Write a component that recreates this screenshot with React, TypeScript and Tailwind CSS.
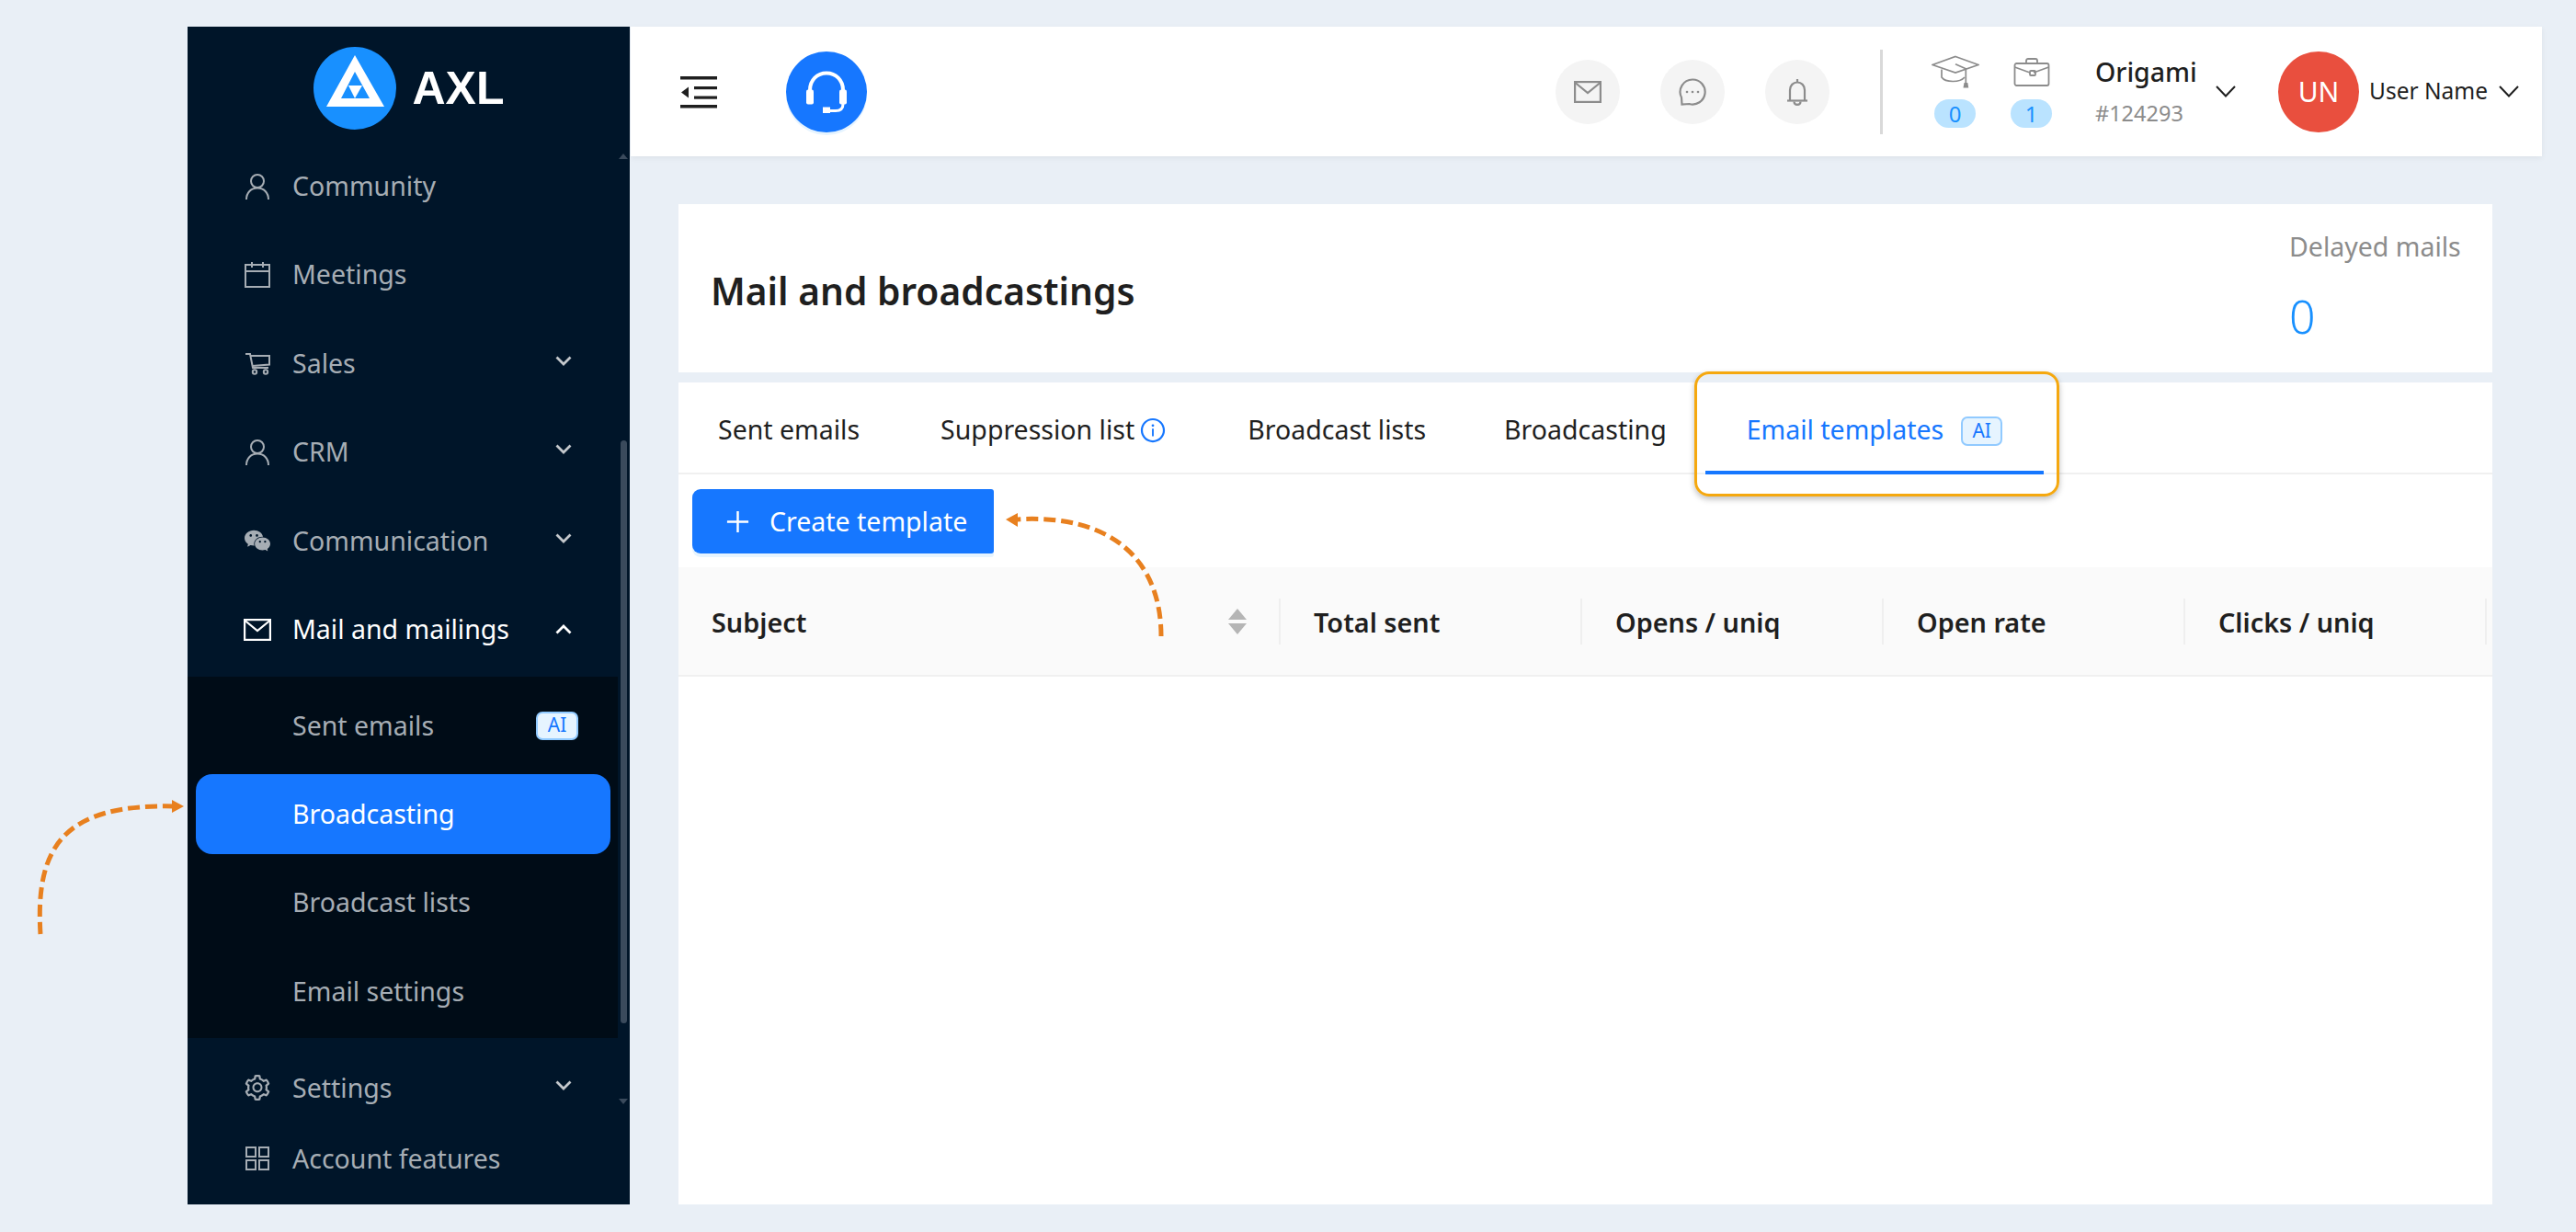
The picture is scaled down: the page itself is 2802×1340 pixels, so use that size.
import React from "react";
import { AiOutlineSetting, AiOutlinePlus, AiFillWechat, AiOutlineInfoCircle } from "react-icons/ai";

const Person = () => (
  <svg viewBox="0 0 28 29" className="h-[29px] w-[28px]" fill="none" stroke="currentColor" strokeWidth="2">
    <circle cx="14" cy="9" r="7" />
    <path d="M2 29c0-7.500 5-12.500 12-12.500S26 21.500 26 29" />
  </svg>
);

const CalendarIcon = () => (
  <svg viewBox="0 0 28 28" className="h-[28px] w-[28px]" fill="none" stroke="currentColor" strokeWidth="2">
    <rect x="1" y="3" width="26" height="24" />
    <path d="M1 10h26M8 0v6M20 0v6" />
  </svg>
);

const CartIcon = () => (
  <svg viewBox="0 0 29 25" className="h-[25px] w-[29px]" fill="none" stroke="currentColor" strokeWidth="2">
    <path d="M1 2h5l3 15h17" />
    <path d="M6.500 4H27v9.500L8.500 15" />
    <circle cx="11" cy="21.500" r="2.200" />
    <circle cx="23" cy="21.500" r="2.200" />
  </svg>
);

const GridIcon = () => (
  <svg viewBox="0 0 26 26" className="h-[26px] w-[26px]" fill="none" stroke="currentColor" strokeWidth="2">
    <rect x="1" y="1" width="10" height="10" />
    <rect x="15" y="1" width="10" height="10" />
    <rect x="1" y="15" width="10" height="10" />
    <rect x="15" y="15" width="10" height="10" />
  </svg>
);

const Chevron = ({ up, className }: { up?: boolean; className?: string }) => (
  <svg viewBox="0 0 18 11" className={`h-[11px] w-[18px] ${className ?? ""}`} fill="none" stroke="currentColor" strokeWidth="2.800">
    <path d={up ? "M1.500 9.500L9 2l7.500 7.500" : "M1.500 1.500L9 9l7.500-7.500"} />
  </svg>
);

const ThinChevron = ({ className }: { className?: string }) => (
  <svg viewBox="0 0 22 13" className={`h-[13px] w-[22px] shrink-0 text-[#1f1f1f] ${className ?? ""}`} fill="none" stroke="currentColor" strokeWidth="2">
    <path d="M1 1l10 10.500L21 1" />
  </svg>
);

const Logo = () => (
  <svg viewBox="0 0 90 90" className="h-[90px] w-[90px]">
    <circle cx="45" cy="45" r="45" fill="#1890ff" />
    <path d="M45 9 L14 65 H77 Z M45 27 L30 56 H61 Z" fill="#fff" fillRule="evenodd" />
    <path d="M38 42 H53 L45 56 Z" fill="#fff" />
  </svg>
);

const Menu = () => (
  <svg viewBox="0 0 40 36" className="h-[36px] w-[40px]" fill="#1f1f1f">
    <rect x="0" y="1" width="40" height="3.500" />
    <rect x="15" y="12" width="25" height="3.200" />
    <rect x="15" y="22.500" width="25" height="3.200" />
    <rect x="0" y="32" width="40" height="3.500" />
    <path d="M1 18.500L9 12.500V24.500Z" />
  </svg>
);

const Headset = () => (
  <svg viewBox="0 0 46 46" className="h-[46px] w-[46px]" fill="none" stroke="#fff" strokeWidth="4">
    <path d="M5 24V21C5 10 13 2.500 23 2.500S41 10 41 21v3" />
    <rect x="1" y="20.500" width="8" height="16" rx="2" fill="#fff" stroke="none" />
    <rect x="37" y="20.500" width="8" height="16" rx="2" fill="#fff" stroke="none" />
    <path d="M41 36c0 5-3 7.500-8 7.500H22" strokeWidth="3" />
    <rect x="19" y="39.500" width="8" height="6.500" fill="#fff" stroke="none" />
  </svg>
);

const Cap = () => (
  <svg viewBox="0 0 52 36" className="h-[36px] w-[52px] shrink-0" fill="none" stroke="#8c8c8c" strokeWidth="1.700">
    <path d="M26 1.500 L51 10.500 L26 19 L1 10.500 Z" />
    <path d="M11 15.500V24c4 6 20 6 25 0" />
    <path d="M26 9.700l11.300 5V30" />
    <path d="M35.500 30h3.800l1 5.500h-5.800z" fill="#8c8c8c" stroke="none" />
  </svg>
);

const Case = () => (
  <svg viewBox="0 0 40 31" className="h-[31px] w-[40px] shrink-0" fill="none" stroke="#8c8c8c" strokeWidth="1.800">
    <rect x="1.500" y="6" width="37" height="24" rx="2" />
    <path d="M14 6V3c0-1.500 1-2 2-2h8c1 0 2 .5 2 2v3" />
    <path d="M1.500 10l16.500 6M38.500 10L22 16" />
    <rect x="18" y="14" width="6" height="5" rx="1" />
  </svg>
);

const Env = ({ cls = "h-[24px] w-[30px]" }: { cls?: string }) => (
  <svg viewBox="0 0 30 24" className={cls} fill="none" stroke="currentColor" strokeWidth="2.200">
    <rect x="1.100" y="1.100" width="27.800" height="21.800" />
    <path d="M1.500 2L15 13 28.500 2" />
  </svg>
);

const Chat = () => (
  <svg viewBox="0 0 30 30" className="h-[30px] w-[30px]" fill="none" stroke="#8c8c8c" strokeWidth="2.200">
    <path d="M15 1.500a13.500 13.500 0 1 1-3.500 26.500l-8 .5-.5-7.500A13.500 13.500 0 0 1 15 1.500Z" />
    <circle cx="9" cy="15" r="1.300" fill="#8c8c8c" stroke="none" />
    <circle cx="15" cy="15" r="1.300" fill="#8c8c8c" stroke="none" />
    <circle cx="21" cy="15" r="1.300" fill="#8c8c8c" stroke="none" />
  </svg>
);

const Bell = () => (
  <svg viewBox="0 0 24 30" className="h-[30px] w-[24px]" fill="none" stroke="#8c8c8c" strokeWidth="2.200">
    <path d="M4 24V13c0-5 3.500-8.500 8-8.500s8 3.500 8 8.500v11" />
    <path d="M1 24.500h22" />
    <path d="M12 1v3" />
    <path d="M8.500 25.500c0 4.500 7 4.500 7 0" />
  </svg>
);

const AiBadge = ({ className }: { className: string }) => (
  <span className={`flex items-center justify-center rounded-[7px] border-2 border-[#91caff] bg-[#e6f4ff] text-[21px] text-[#1677ff] ${className}`}>AI</span>
);

type RowProps = { icon: React.ReactNode; label: string; chev?: "down" | "up"; active?: boolean; h?: string };

const Row = ({ icon, label, chev, active, h = "h-[96.5px]" }: RowProps) => (
  <div className={`flex ${h} items-center pl-[60px] pr-[63px] ${active ? "text-white" : "text-[#a6adb4]"}`}>
    <span className="flex w-[32px] justify-center">{icon}</span>
    <span className="ml-[22px] flex-1">{label}</span>
    {chev === "down" && <Chevron className="mb-[6px] text-[#c4c8cc]" />}
    {chev === "up" && <Chevron up className="text-white" />}
  </div>
);

const Sub = ({ label, active, badge }: { label: string; active?: boolean; badge?: boolean }) => (
  <div className="flex h-[96.3px] items-center pl-[9px] pr-[8px]">
    <div className={`flex h-[87px] w-full items-center rounded-[18px] pl-[105px] pr-[35px] ${active ? "bg-[#1677ff] text-white" : "text-[#a6adb4]"}`}>
      <span className="flex-1">{label}</span>
      {badge && <AiBadge className="h-[31px] w-[46px]" />}
    </div>
  </div>
);

const Circle = ({ children }: { children: React.ReactNode }) => (
  <div className="flex h-[70px] w-[70px] items-center justify-center rounded-full bg-[#f4f4f4]">{children}</div>
);

const Column = ({ label, w, sort }: { label: string; w: string; sort?: boolean }) => (
  <div className={`relative flex h-full items-center pl-[36px] ${w}`}>
    <span className="flex-1 pt-[3px]">{label}</span>
    {sort && (
      <span className="mr-[35px] flex flex-col gap-[4px]">
        <span className="h-0 w-0 border-x-[10px] border-b-[12px] border-x-transparent border-b-[#b5b5b5]" />
        <span className="h-0 w-0 border-x-[10px] border-t-[12px] border-x-transparent border-t-[#b5b5b5]" />
      </span>
    )}
    <span className="h-[50px] w-[2px] bg-[#efefef]" />
  </div>
);

export default function App() {
  return (
    <div className="relative h-[1340px] w-[2802px] overflow-hidden bg-[#e9eff6] pl-[204px] pr-[37px] pt-[29px] font-['Noto_Sans',sans-serif] text-[28.5px]">
      <div className="flex h-[1281px]">
        <aside className="relative h-full w-[481px] shrink-0 bg-[#001529]">
          <div className="flex h-[125px] items-start justify-center pt-[22px]">
            <Logo />
            <span className="ml-[18px] mt-[15px] font-['Liberation_Sans',sans-serif] text-[50px] font-bold leading-[60px] text-white">AXL</span>
          </div>
          <Row icon={<Person />} label="Community" />
          <Row icon={<CalendarIcon />} label="Meetings" />
          <Row icon={<CartIcon />} label="Sales" chev="down" />
          <Row icon={<Person />} label="CRM" chev="down" />
          <Row icon={<AiFillWechat className="text-[36px]" />} label="Communication" chev="down" />
          <Row icon={<Env />} label="Mail and mailings" chev="up" active />
          <div className="mt-[3px] h-[393px] w-[468px] bg-[#000c17] pt-[5px]">
            <Sub label="Sent emails" badge />
            <Sub label="Broadcasting" active />
            <Sub label="Broadcast lists" />
            <Sub label="Email settings" />
          </div>
          <Row icon={<AiOutlineSetting className="text-[34px]" />} label="Settings" chev="down" h="h-[108px]" />
          <Row icon={<GridIcon />} label="Account features" h="h-[46px]" />
          <div className="absolute right-[3px] top-[450px] h-[634px] w-[7px] rounded-full bg-[#3a4a5c]" />
          <div className="absolute right-[2px] top-[138px] h-0 w-0 border-x-[5px] border-b-[6px] border-x-transparent border-b-[#3a4a5c]" />
          <div className="absolute right-[2px] top-[1166px] h-0 w-0 border-x-[5px] border-t-[6px] border-x-transparent border-t-[#3a4a5c]" />
        </aside>

        <main className="ml-[1px] flex min-w-0 flex-1 flex-col">
          <header className="flex h-[141px] items-center bg-white pl-[54px] pr-[25px] shadow-[0_2px_6px_rgba(0,0,0,0.06)]">
            <Menu />
            <div className="ml-[75px] flex h-[88px] w-[88px] items-center justify-center rounded-full bg-[#1677ff] shadow-[0_3px_0_#e6f4ff]">
              <Headset />
            </div>
            <div className="flex-1" />
            <div className="flex gap-[44px] text-[#8c8c8c]">
              <Circle><Env /></Circle>
              <Circle><Chat /></Circle>
              <Circle><Bell /></Circle>
            </div>
            <div className="ml-[55px] h-[92px] w-[3px] bg-[#d9d9d9]" />
            <div className="ml-[56px] flex gap-[38px]">
              <div className="flex w-[45px] flex-col items-center gap-[12px]">
                <div className="flex h-[36px] items-center"><Cap /></div>
                <span className="flex h-[31px] w-[45px] items-center justify-center rounded-full bg-[#bae3ff] text-[24px] leading-none text-[#1890ff]">0</span>
              </div>
              <div className="flex w-[45px] flex-col items-center gap-[12px]">
                <div className="flex h-[36px] items-center"><Case /></div>
                <span className="flex h-[31px] w-[45px] items-center justify-center rounded-full bg-[#bae3ff] text-[24px] leading-none text-[#1890ff]">1</span>
              </div>
            </div>
            <div className="ml-[47px] flex w-[111px] flex-col">
              <span className="-mt-[2px] text-[28.5px] font-medium leading-[40px] text-[#1f1f1f]">Origami</span>
              <span className="mt-[9px] text-[23.5px] leading-[32px] text-[#8c8c8c]">#124293</span>
            </div>
            <ThinChevron className="ml-[20px]" />
            <div className="ml-[46px] flex h-[88px] w-[88px] shrink-0 items-center justify-center rounded-full bg-[#e94f3e] text-[30px] text-white">UN</div>
            <span className="ml-[11px] w-[127px] whitespace-nowrap text-[24.5px] text-[#1f1f1f]">User Name</span>
            <ThinChevron className="ml-[14px]" />
          </header>

          <div className="ml-[52px] mr-[54px] mt-[52px] flex min-h-0 flex-1 flex-col">
            <section className="flex h-[183px] items-start justify-between bg-white pl-[35px] pr-[34px]">
              <h1 className="mt-[68px] text-[40.7px] font-semibold leading-[52px] text-[#1f1f1f]">Mail and broadcastings</h1>
              <div className="mt-[28px] w-[187px]">
                <div className="text-[28.5px] leading-[36px] text-[#8c8c8c]">Delayed mails</div>
                <div className="mt-[27px] text-[50px] font-light leading-[62px] text-[#1890ff]">0</div>
              </div>
            </section>

            <section className="mt-[11px] flex min-h-0 flex-1 flex-col bg-white">
              <nav className="flex h-[100px] items-center border-b-2 border-[#f0f0f0] pl-[43px] pt-[5px] text-[#1f1f1f]">
                <span>Sent emails</span>
                <span className="ml-[88px] flex items-center">Suppression list<AiOutlineInfoCircle className="ml-[5px] text-[30px] text-[#1677ff]" /></span>
                <span className="ml-[88px]">Broadcast lists</span>
                <span className="ml-[85px]">Broadcasting</span>
                <span className="ml-[87px] text-[#1677ff]">Email templates</span>
                <AiBadge className="ml-[19px] mt-[3px] h-[32px] w-[45px]" />
              </nav>
              <div className="h-[101px] pl-[15px] pt-[16px]">
                <button className="flex h-[70px] w-[328px] items-center rounded-l-[9px] rounded-r-[3px] bg-[#1677ff] pl-[33px] text-white shadow-[0_4px_0_#e6f4ff]">
                  <AiOutlinePlus className="text-[33px]" />
                  <span className="ml-[18px]">Create template</span>
                </button>
              </div>
              <div className="flex h-[119px] items-center border-b-2 border-[#f0f0f0] bg-[#fafafa] text-[28.8px] font-semibold text-[#1f1f1f]">
                <Column label="Subject" w="w-[655px]" sort />
                <Column label="Total sent" w="w-[328px]" />
                <Column label="Opens / uniq" w="w-[328px]" />
                <Column label="Open rate" w="w-[328px]" />
                <Column label="Clicks / uniq" w="w-[328px]" />
              </div>
            </section>
          </div>
        </main>
      </div>

      <div className="absolute left-[1843px] top-[404px] h-[136px] w-[397px] rounded-[16px] border-[3px] border-[#f5a80f] shadow-[0_3px_6px_rgba(0,0,0,0.25)]">
        <div className="absolute bottom-[21px] left-[9px] h-[4px] w-[368px] bg-[#1677ff]" />
      </div>

      <svg className="absolute left-0 top-0 h-[1340px] w-[2802px]" viewBox="0 0 2802 1340" fill="none">
        <path d="M44 1016 C38 920 70 874 190 877" stroke="#e8801f" strokeWidth="5" strokeDasharray="13 6" />
        <path d="M187 870 L200 877 L187 884 Z" fill="#e8801f" />
        <path d="M1263 692 C1263 610 1210 558 1104 565" stroke="#e8801f" strokeWidth="5" strokeDasharray="13 6" />
        <path d="M1107 558 L1094 565 L1107 573 Z" fill="#e8801f" />
      </svg>
    </div>
  );
}
